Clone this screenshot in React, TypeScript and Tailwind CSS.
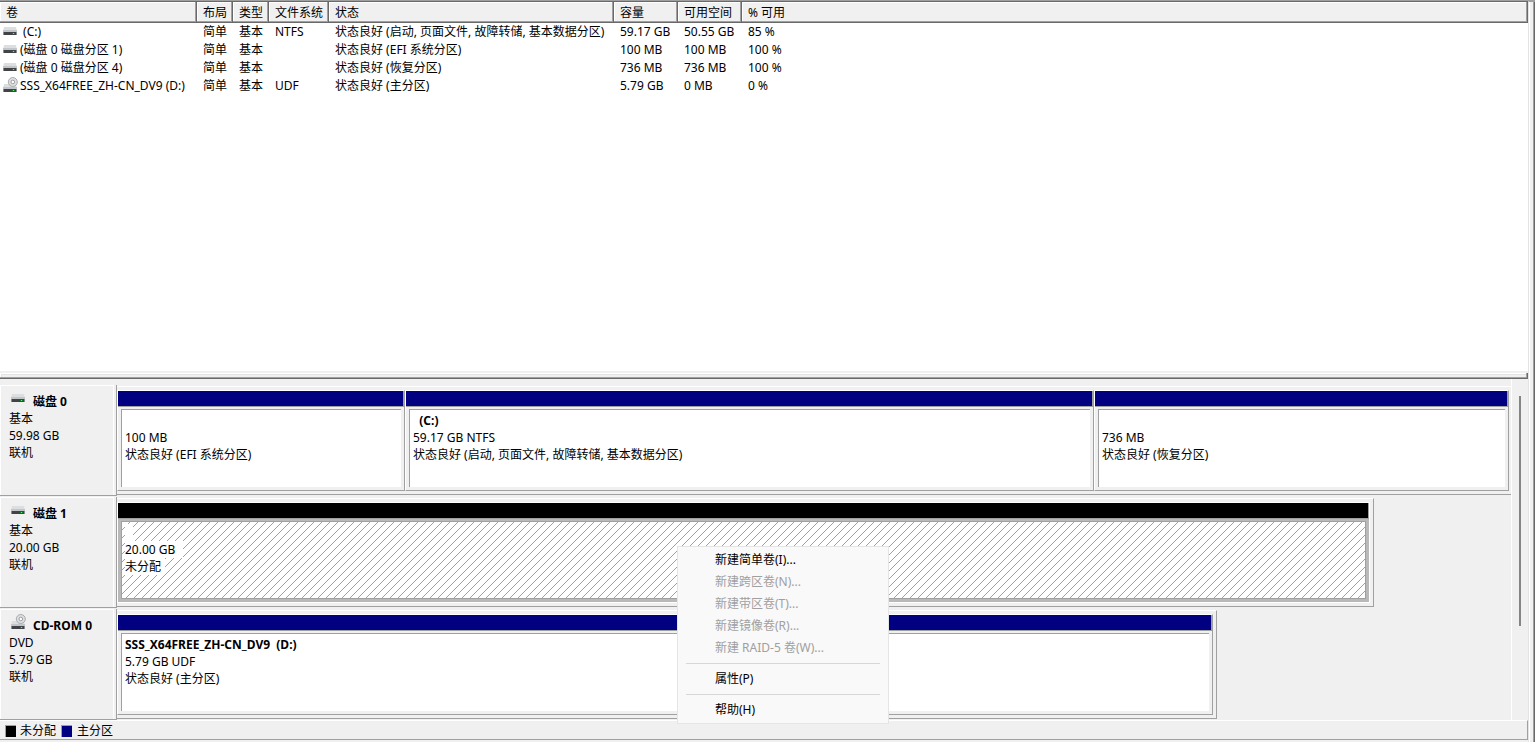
import clsx from "clsx";

type Kind = "primary" | "unallocated";

type Partition = {
  name?: string;
  size: string;
  status: string;
  kind: Kind;
  share: number;
};

type Disk = {
  name: string;
  type: string;
  size: string;
  state: string;
  optical?: boolean;
  share: number;
  partitions: Partition[];
};

const columns = [
  { title: "卷", width: "w-[197px]" },
  { title: "布局", width: "w-9" },
  { title: "类型", width: "w-9" },
  { title: "文件系统", width: "w-[60px]" },
  { title: "状态", width: "w-[285px]" },
  { title: "容量", width: "w-16" },
  { title: "可用空间", width: "w-16" },
  { title: "% 可用", width: "" },
];

const volumes = [
  {
    name: " (C:)",
    cells: ["简单", "基本", "NTFS", "状态良好 (启动, 页面文件, 故障转储, 基本数据分区)", "59.17 GB", "50.55 GB", "85 %"],
  },
  {
    name: "(磁盘 0 磁盘分区 1)",
    cells: ["简单", "基本", "", "状态良好 (EFI 系统分区)", "100 MB", "100 MB", "100 %"],
  },
  {
    name: "(磁盘 0 磁盘分区 4)",
    cells: ["简单", "基本", "", "状态良好 (恢复分区)", "736 MB", "736 MB", "100 %"],
  },
  {
    name: "SSS_X64FREE_ZH-CN_DV9 (D:)",
    optical: true,
    cells: ["简单", "基本", "UDF", "状态良好 (主分区)", "5.79 GB", "0 MB", "0 %"],
  },
];

// share is relative to the widest disk
const FULL = 1394;

const disks: Disk[] = [
  {
    name: "磁盘 0",
    type: "基本",
    size: "59.98 GB",
    state: "联机",
    share: FULL,
    partitions: [
      { size: "100 MB", status: "状态良好 (EFI 系统分区)", kind: "primary", share: 286 },
      {
        name: "  (C:)",
        size: "59.17 GB NTFS",
        status: "状态良好 (启动, 页面文件, 故障转储, 基本数据分区)",
        kind: "primary",
        share: 687,
      },
      { size: "736 MB", status: "状态良好 (恢复分区)", kind: "primary", share: 413 },
    ],
  },
  {
    name: "磁盘 1",
    type: "基本",
    size: "20.00 GB",
    state: "联机",
    share: 1257,
    partitions: [{ size: "20.00 GB", status: "未分配", kind: "unallocated", share: 1 }],
  },
  {
    name: "CD-ROM 0",
    type: "DVD",
    size: "5.79 GB",
    state: "联机",
    optical: true,
    share: 1100,
    partitions: [
      {
        name: "SSS_X64FREE_ZH-CN_DV9  (D:)",
        size: "5.79 GB UDF",
        status: "状态良好 (主分区)",
        kind: "primary",
        share: 1,
      },
    ],
  },
];

const menuGroups = [
  [
    { label: "新建简单卷(I)...", enabled: true },
    { label: "新建跨区卷(N)...", enabled: false },
    { label: "新建带区卷(T)...", enabled: false },
    { label: "新建镜像卷(R)...", enabled: false },
    { label: "新建 RAID-5 卷(W)...", enabled: false },
  ],
  [{ label: "属性(P)", enabled: true }],
  [{ label: "帮助(H)", enabled: true }],
];

function DriveIcon({ optical }: { optical?: boolean }) {
  return (
    <svg className="h-4 w-4 shrink-0" viewBox="0 0 16 16" aria-hidden="true">
      <g transform={optical ? "translate(0 3)" : undefined}>
        <path d="M2 4h12l1 5H1z" fill="#dcdee0" />
        <path d="M1 7h14v2H1z" fill="#c3c6c8" />
        <path d="M1 9h14v3H1z" fill="#8a8d8f" />
        <path d="M2 9h12v3H2z" fill="#404446" />
        <path d="M10 10h3v1h-3z" fill="#128a26" />
        <path d="M11 10h1v1h-1z" fill="#4dff5e" />
      </g>
      {optical && (
        <>
          <circle cx="10.8" cy="5" r="4.5" fill="#dcdee0" stroke="#a3a6a8" strokeWidth="0.9" />
          <circle cx="10.8" cy="5" r="1.8" fill="#ffffff" stroke="#94979a" strokeWidth="0.9" />
        </>
      )}
    </svg>
  );
}

function VolumeList() {
  return (
    <div className="flex-1 bg-white">
      <table className="w-full table-fixed text-left whitespace-nowrap">
        <thead>
          <tr>
            {columns.map((column) => (
              <th
                key={column.title}
                scope="col"
                className={clsx(
                  "h-[21px] bg-[#f0f0f0] pt-px pl-1.5 font-normal shadow-[inset_-1px_-1px_0_#696969,inset_-2px_-2px_0_#a0a0a0,inset_1px_1px_0_#ffffff]",
                  column.width,
                )}
              >
                {column.title}
              </th>
            ))}
          </tr>
        </thead>
        <tbody>
          {volumes.map((volume) => (
            <tr key={volume.name} className="h-[18px]">
              <td className="pl-0.5">
                <div className="flex h-[18px] items-start gap-0.5">
                  <DriveIcon optical={volume.optical} />
                  <span className="whitespace-pre">{volume.name}</span>
                </div>
              </td>
              {volume.cells.map((cell, i) => (
                <td key={i} className="pl-1.5 align-top">
                  {cell}
                </td>
              ))}
            </tr>
          ))}
        </tbody>
      </table>
    </div>
  );
}

function Hatch() {
  return (
    <svg className="absolute inset-0 h-full w-full" aria-hidden="true">
      <defs>
        <pattern id="hatch" width="8" height="8" patternUnits="userSpaceOnUse">
          <path
            d="M0 7h1v1H0zM1 6h1v1H1zM2 5h1v1H2zM3 4h1v1H3zM4 3h1v1H4zM5 2h1v1H5zM6 1h1v1H6zM7 0h1v1H7z"
            fill="#a0a0a0"
          />
        </pattern>
      </defs>
      <rect width="100%" height="100%" fill="url(#hatch)" />
    </svg>
  );
}

function PartitionBox({ partition }: { partition: Partition }) {
  const free = partition.kind === "unallocated";

  return (
    <div
      className={clsx(
        "flex min-w-0 basis-0 flex-col border border-t-white border-l-white",
        free ? "border-r-white border-b-white" : "border-r-[#a0a0a0] border-b-[#a0a0a0]",
      )}
      style={{ flexGrow: partition.share }}
    >
      <div
        className={clsx(
          "h-4 border-r border-b border-[#a0a0a0]",
          free ? "bg-black" : "bg-[#000080]",
        )}
      />
      <div
        className={clsx(
          "flex flex-1 px-[3px] pt-0.5 pb-[3px]",
          free ? "bg-[#b9b9b9]" : "bg-[#f0f0f0]",
        )}
      >
        <div
          className={clsx(
            "relative min-w-0 flex-1 overflow-hidden border-t border-l border-[#a0a0a0] bg-white pt-0.5 pl-[3px] leading-[17px] whitespace-pre",
            free && "border-r border-b",
          )}
        >
          {free && <Hatch />}
          <div className="relative flex flex-col items-start">
            <p className="h-[17px] font-bold">
              <span className={clsx(free && "bg-white pr-2")}>{partition.name}</span>
            </p>
            <p className={clsx(free && "bg-white pr-2")}>{partition.size}</p>
            <p className={clsx(free && "bg-white pr-1")}>{partition.status}</p>
          </div>
        </div>
      </div>
    </div>
  );
}

function DiskRow({ disk }: { disk: Disk }) {
  const full = disk.share === FULL;

  return (
    <section className="flex h-[111px]">
      <div className="w-[117px] shrink-0 border-r border-b border-[#a0a0a0] pr-0.5">
        <div className="h-full border-t border-r border-l border-white pt-1 pl-[9px] leading-[17px]">
          <div className="flex gap-[7px]">
            <DriveIcon optical={disk.optical} />
            <h2 className="pt-[3px] font-bold">{disk.name}</h2>
          </div>
          <div className="-ml-px">
            <p>{disk.type}</p>
            <p>{disk.size}</p>
            <p>{disk.state}</p>
          </div>
        </div>
      </div>
      <div className="flex min-w-0 flex-1 py-px">
        <div
          className={clsx(
            "flex border-t border-b border-t-white border-b-[#a0a0a0] py-[3px]",
            full ? "pr-0.5" : "border-r border-r-[#a0a0a0] pr-[3px]",
          )}
          style={{ width: `${(disk.share / FULL) * 100}%` }}
        >
          {disk.partitions.map((partition) => (
            <PartitionBox key={partition.size} partition={partition} />
          ))}
        </div>
      </div>
    </section>
  );
}

function ContextMenu() {
  return (
    <div
      role="menu"
      className="absolute top-[167px] left-[677px] w-[212px] border border-[#e5e5e5] bg-[#f9f9f9] pt-0.5 pb-0.5"
    >
      {menuGroups.map((group, i) => (
        <div key={i}>
          {i > 0 && <hr className="mx-2 my-1 border-[#d7d7d7]" />}
          {group.map((item) => (
            <button
              key={item.label}
              type="button"
              role="menuitem"
              disabled={!item.enabled}
              className="block h-[22px] w-full pl-[37px] text-left text-black disabled:text-[#a0a0a0]"
            >
              {item.label}
            </button>
          ))}
        </div>
      ))}
    </div>
  );
}

export default function App() {
  return (
    <div className="flex min-h-screen border-t border-[#a0a0a0] bg-[#f0f0f0] font-['Noto_Sans','Noto_Sans_CJK_SC',sans-serif] text-[12px] leading-[18px] text-black">
      <main className="flex min-w-0 flex-1 flex-col border-t border-[#696969]">
        <VolumeList />
        <div className="h-2 pt-0.5">
          <div className="h-1.5 shadow-[inset_-1px_-1px_0_#696969,inset_-2px_-2px_0_#a0a0a0,inset_1px_1px_0_#ffffff,inset_2px_2px_0_#e3e3e3]" />
        </div>

        <div className="relative flex">
          <div className="flex min-w-0 flex-1 flex-col gap-px pt-1.5">
            {disks.map((disk) => (
              <DiskRow key={disk.name} disk={disk} />
            ))}
          </div>
          <div className="w-[17px] border-l border-white pt-[17px] pl-[7px]">
            <div className="h-[230px] w-0.5 bg-[#858585]" />
          </div>
          <ContextMenu />
        </div>

        <footer className="pb-0.5">
          <ul className="flex h-5 items-center gap-[5px] border-t border-r border-b border-t-white border-r-[#a0a0a0] border-b-[#a0a0a0] pt-px pl-[5px]">
            <li className="flex items-center gap-1">
              <span className="h-3 w-[11px] border-t border-l border-[#a0a0a0] bg-black" />
              未分配
            </li>
            <li className="flex items-center gap-[5px]">
              <span className="h-3 w-[11px] border-t border-l border-[#a0a0a0] bg-[#000080]" />
              主分区
            </li>
          </ul>
        </footer>
      </main>
      <div className="w-[7px] border-t border-l border-t-[#a0a0a0] border-l-[#e3e3e3] shadow-[inset_1px_0_0_#ffffff,inset_-1px_0_0_#696969,inset_-2px_0_0_#a0a0a0]" />
    </div>
  );
}
